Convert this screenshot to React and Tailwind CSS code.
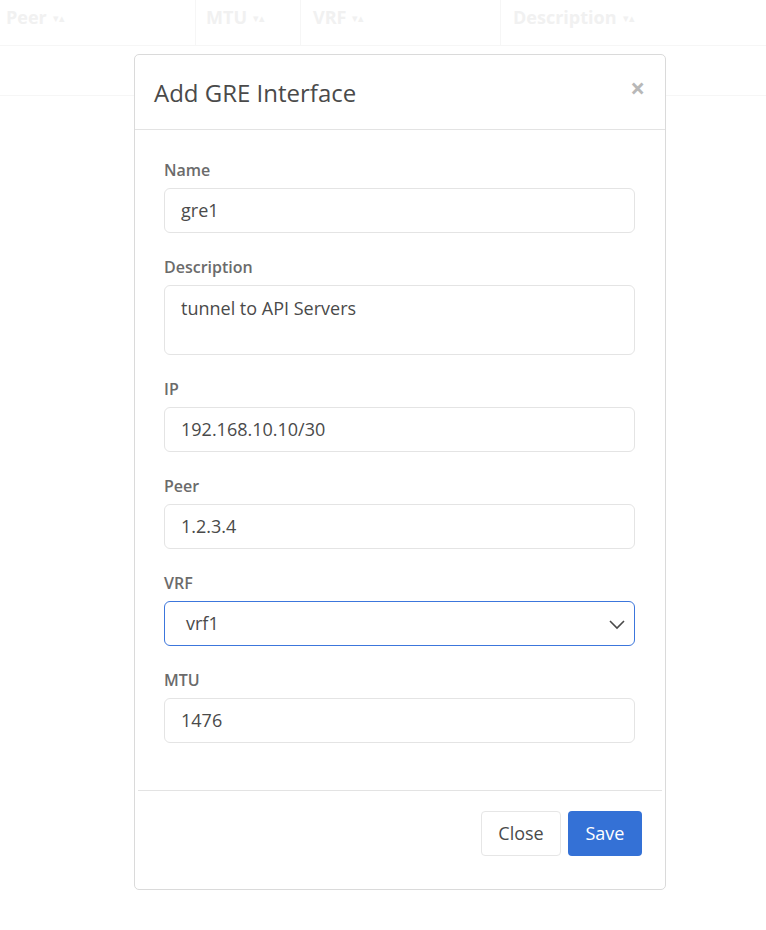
import React from "react";

const fields = [
  { label: "Name", value: "gre1" },
  { label: "Description", value: "tunnel to API Servers", area: true },
  { label: "IP", value: "192.168.10.10/30" },
  { label: "Peer", value: "1.2.3.4" },
  { label: "VRF", value: "vrf1", select: true },
  { label: "MTU", value: "1476" },
];

const columns = [
  { name: "Peer", w: "w-[195px] pl-[6px]" },
  { name: "MTU", w: "w-[105px] pl-[10px] border-l border-[#f6f6f6]" },
  { name: "VRF", w: "w-[200px] pl-[12px] border-l border-[#f6f6f6]" },
  { name: "Description", w: "flex-1 pl-[12px] border-l border-[#f6f6f6]" },
];

const Field = ({ label, value, area, select }) => {
  return (
    <div className="mb-[22px]">
      <div className="text-[16px] leading-[24px] font-semibold text-[#6b6b6b] mb-[6px]">
        {label}
      </div>
      {select ? (
        <div className="h-[45px] rounded-[6px] border border-[#3c76dc] flex items-center justify-between pl-[21px] pr-[8px]">
          <span className="text-[18px] text-[#4a4a4a]">{value}</span>
          <svg width="18" height="12" viewBox="0 0 18 12" fill="none">
            <path d="M2 3l7 7 7-7" stroke="#4a4a4a" strokeWidth="1.6" />
          </svg>
        </div>
      ) : (
        <div
          className={
            "rounded-[6px] border border-[#e4e4e4] px-[16px] text-[18px] text-[#4a4a4a] " +
            (area ? "h-[70px] pt-[9px]" : "h-[45px] flex items-center")
          }
        >
          {value}
        </div>
      )}
    </div>
  );
};

const App = () => {
  return (
    <div
      className="relative w-[766px] h-[930px] bg-white overflow-hidden"
      style={{ fontFamily: '"Open Sans", "Liberation Sans", sans-serif' }}
    >
      {/* faded table behind the modal */}
      <div className="flex h-[46px] border-b border-[#f6f6f6]">
        {columns.map((c) => (
          <div key={c.name} className={c.w + " flex items-start pt-[4px]"}>
            <span className="text-[18px] font-bold text-[#f1f1f1]">{c.name}</span>
            <span className="ml-[6px] mt-[6px] text-[11px] text-[#f1f1f1]">▾▴</span>
          </div>
        ))}
      </div>
      <div className="h-[50px] border-b border-[#f6f6f6]"></div>

      {/* modal */}
      <div className="absolute left-[134px] top-[54px] w-[532px] h-[836px] bg-white border border-[#dadada] rounded-[5px]">
        <div className="h-[75px] border-b border-[#e3e3e3] flex items-start justify-between pl-[19px] pr-[20px]">
          <div className="text-[24px] text-[#4a4a4a] pt-[20px]">Add GRE Interface</div>
          <div className="text-[26px] leading-[26px] font-bold text-[#b8b8b8] pt-[20px]">×</div>
        </div>
        <div className="pt-[28px] pl-[29px] pr-[30px] pb-[25px]">
          {fields.map((f) => (
            <Field key={f.label} {...f} />
          ))}
        </div>
        <div className="mx-[3px] border-t border-[#e3e3e3] pt-[20px] pr-[20px] flex justify-end gap-[7px]">
          <button className="h-[45px] w-[80px] rounded-[4px] border border-[#e6e6e6] bg-white text-[18px] text-[#4a4a4a]">
            Close
          </button>
          <button className="h-[45px] w-[74px] rounded-[4px] bg-[#3471d6] text-[18px] text-white">
            Save
          </button>
        </div>
      </div>
    </div>
  );
};

export default App;
